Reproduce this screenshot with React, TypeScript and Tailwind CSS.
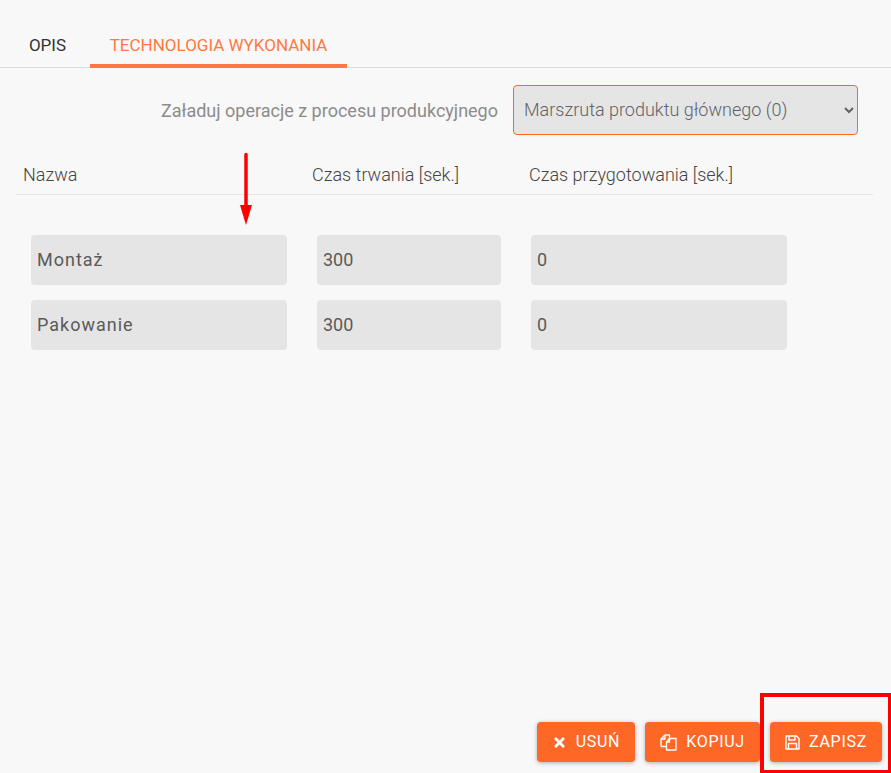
import { FaTimes } from 'react-icons/fa'

function FilesIcon() {
  return (
    <svg width="17" height="17" viewBox="0 0 17 17" fill="none" stroke="currentColor" strokeWidth="1.3" strokeLinejoin="round">
      <path d="M7 12.5H1V5L5 1H9.5V4.5" />
      <path d="M5 1V5H1" />
      <path d="M6.5 16V8L9.5 4.5H16V16Z" fill="#ff6726" />
      <path d="M9.5 4.5V8H6.5" />
    </svg>
  )
}

function SaveIcon() {
  return (
    <svg width="15" height="15" viewBox="0 0 15 15" fill="none" stroke="currentColor" strokeWidth="1.4" strokeLinejoin="round">
      <path d="M1 1H11.5L14 3.5V14H1Z" />
      <path d="M4 1.5V5H10V1.5" />
      <path d="M3.5 14V8.5H11.5V14" />
    </svg>
  )
}

function ActionButton({ icon, label, className }: { icon: React.ReactNode; label: string; className: string }) {
  return (
    <button className={`flex h-10 items-center justify-center gap-[9px] rounded bg-[#ff6726] text-[16px] tracking-[0.7px] text-white shadow-[0_1px_4px_rgba(0,0,0,0.3)] ${className}`}>
      {icon}
      {label}
    </button>
  )
}

function OperationRow({ name, time, prep }: { name: string; time: string; prep: string }) {
  const field = 'h-[50px] rounded bg-[#e5e5e5] pb-[2px] text-[#5a5a5a] outline-none'
  return (
    <div className="flex gap-[30px]">
      <input readOnly value={name} className={`${field} w-[256px] px-[6px] text-[18px] tracking-[1px]`} />
      <input readOnly value={time} className={`${field} w-[184px] px-[6px] text-[18px]`} />
      <input readOnly value={prep} className={`${field} w-[256px] px-[6px] text-[18px]`} />
    </div>
  )
}

export default function App() {
  return (
    <div className="relative flex h-[773px] w-[891px] flex-col overflow-hidden bg-[#f8f8f8] font-['Roboto',sans-serif]">
      {/* Tabs */}
      <div className="flex h-[68px] shrink-0 items-end border-b border-[#dcdcdc] pl-[10px]">
        <div className="flex h-[38px] w-[75px] justify-center pt-[2px] text-[17px] leading-[28px] text-[#333]">OPIS</div>
        <div className="mb-[-1px] ml-[5px] flex h-[39px] w-[257px] justify-center border-b-4 border-[#ff7843] pt-[2px] text-[17px] leading-[28px] text-[#ff7843]">
          TECHNOLOGIA WYKONANIA
        </div>
      </div>

      {/* Load operations */}
      <div className="mt-[17px] flex items-center justify-end pr-[33px]">
        <span className="mr-[15px] text-[18px] text-[#8c8c8c]">Załaduj operacje z procesu produkcyjnego</span>
        <select className="h-[50px] w-[345px] rounded border border-[#ff6726] bg-[#e5e5e5] pb-[2px] pl-[6px] text-[18px] font-light text-[#5f6368] outline-none">
          <option>Marszruta produktu głównego (0)</option>
        </select>
      </div>

      {/* Table header */}
      <div className="mx-[16px] mt-[20px] flex h-[40px] w-[857px] items-center border-b border-[#e5e5e5] text-[18px] font-light text-[#444]">
        <span className="ml-[7px] w-[289px]">Nazwa</span>
        <span className="w-[217px]">Czas trwania [sek.]</span>
        <span>Czas przygotowania [sek.]</span>
      </div>

      {/* Rows */}
      <div className="ml-[31px] mt-[40px] flex flex-col gap-[15px]">
        <OperationRow name="Montaż" time="300" prep="0" />
        <OperationRow name="Pakowanie" time="300" prep="0" />
      </div>

      {/* Actions */}
      <div className="mt-auto mb-[11px] flex justify-end gap-[10px] pr-[9px]">
        <ActionButton icon={<FaTimes size={15} />} label="USUŃ" className="w-[98px]" />
        <ActionButton icon={<FilesIcon />} label="KOPIUJ" className="w-[115px]" />
        <ActionButton icon={<SaveIcon />} label="ZAPISZ" className="w-[112px]" />
      </div>

      {/* Annotations */}
      <svg className="absolute left-[236px] top-[150px]" width="20" height="76" viewBox="0 0 20 76">
        <path d="M10 4.5V60" stroke="#ff0000" strokeWidth="3.5" strokeLinecap="round" />
        <path d="M4 55H16L10 75Z" fill="#ff0000" />
      </svg>
      <div className="absolute left-[760px] top-[693px] h-[81px] w-[132px] border-4 border-[#ff0000]" />
    </div>
  )
}
